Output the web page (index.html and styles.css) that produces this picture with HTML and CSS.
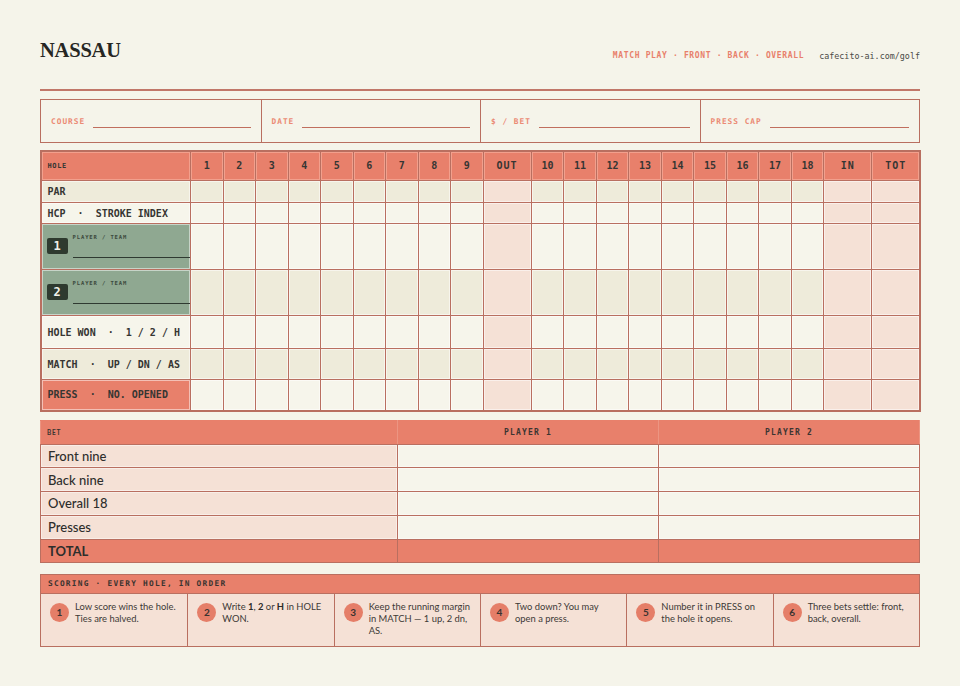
FILE: index.html
```html
<!DOCTYPE html>
<html lang="en">
<head>
<meta charset="utf-8">
<title>Nassau</title>
<link rel="stylesheet" href="styles.css">
</head>
<body>
<div class="page">
  <header class="top">
    <h1 class="title">NASSAU</h1>
    <div class="meta">
      <span class="modes">MATCH PLAY · FRONT · BACK · OVERALL</span>
      <span class="site">cafecito-ai.com/golf</span>
    </div>
  </header>
  <div class="rule"></div>

  <div class="fields">
    <div class="field"><span class="flabel">COURSE</span><span class="fline"></span></div>
    <div class="field"><span class="flabel">DATE</span><span class="fline"></span></div>
    <div class="field"><span class="flabel">$ / BET</span><span class="fline"></span></div>
    <div class="field"><span class="flabel">PRESS CAP</span><span class="fline"></span></div>
  </div>

  <table class="card">
    <colgroup>
      <col class="c-label">
      <col class="c-h"><col class="c-h"><col class="c-h"><col class="c-h"><col class="c-h"><col class="c-h"><col class="c-h"><col class="c-h"><col class="c-h">
      <col class="c-s">
      <col class="c-h"><col class="c-h"><col class="c-h"><col class="c-h"><col class="c-h"><col class="c-h"><col class="c-h"><col class="c-h"><col class="c-h">
      <col class="c-s"><col class="c-s">
    </colgroup>
    <tr class="r-head">
      <th class="lab small">HOLE</th>
      <th>1</th><th>2</th><th>3</th><th>4</th><th>5</th><th>6</th><th>7</th><th>8</th><th>9</th>
      <th class="sum">OUT</th>
      <th>10</th><th>11</th><th>12</th><th>13</th><th>14</th><th>15</th><th>16</th><th>17</th><th>18</th>
      <th class="sum">IN</th><th class="sum">TOT</th>
    </tr>
    <tr class="r-par">
      <td class="lab">PAR</td>
      <td></td><td></td><td></td><td></td><td></td><td></td><td></td><td></td><td></td><td class="s"></td>
      <td></td><td></td><td></td><td></td><td></td><td></td><td></td><td></td><td></td><td class="s"></td><td class="s"></td>
    </tr>
    <tr class="r-hcp">
      <td class="lab">HCP &nbsp;·&nbsp; STROKE INDEX</td>
      <td></td><td></td><td></td><td></td><td></td><td></td><td></td><td></td><td></td><td class="s"></td>
      <td></td><td></td><td></td><td></td><td></td><td></td><td></td><td></td><td></td><td class="s"></td><td class="s"></td>
    </tr>
    <tr class="r-p1">
      <td class="lab player">
        <div class="pwrap"><span class="badge">1</span><div class="pname"><span class="ptag">PLAYER / TEAM</span></div></div>
      </td>
      <td></td><td></td><td></td><td></td><td></td><td></td><td></td><td></td><td></td><td class="s"></td>
      <td></td><td></td><td></td><td></td><td></td><td></td><td></td><td></td><td></td><td class="s"></td><td class="s"></td>
    </tr>
    <tr class="r-p2">
      <td class="lab player">
        <div class="pwrap"><span class="badge">2</span><div class="pname"><span class="ptag">PLAYER / TEAM</span></div></div>
      </td>
      <td></td><td></td><td></td><td></td><td></td><td></td><td></td><td></td><td></td><td class="s"></td>
      <td></td><td></td><td></td><td></td><td></td><td></td><td></td><td></td><td></td><td class="s"></td><td class="s"></td>
    </tr>
    <tr class="r-won">
      <td class="lab">HOLE WON &nbsp;·&nbsp; 1 / 2 / H</td>
      <td></td><td></td><td></td><td></td><td></td><td></td><td></td><td></td><td></td><td class="s"></td>
      <td></td><td></td><td></td><td></td><td></td><td></td><td></td><td></td><td></td><td class="s"></td><td class="s"></td>
    </tr>
    <tr class="r-match">
      <td class="lab">MATCH &nbsp;·&nbsp; UP / DN / AS</td>
      <td></td><td></td><td></td><td></td><td></td><td></td><td></td><td></td><td></td><td class="s"></td>
      <td></td><td></td><td></td><td></td><td></td><td></td><td></td><td></td><td></td><td class="s"></td><td class="s"></td>
    </tr>
    <tr class="r-press">
      <td class="lab">PRESS &nbsp;·&nbsp; NO. OPENED</td>
      <td></td><td></td><td></td><td></td><td></td><td></td><td></td><td></td><td></td><td class="s"></td>
      <td></td><td></td><td></td><td></td><td></td><td></td><td></td><td></td><td></td><td class="s"></td><td class="s"></td>
    </tr>
  </table>

  <table class="bets">
    <colgroup><col class="b-label"><col class="b-p"><col class="b-p"></colgroup>
    <tr class="b-head"><th class="b-bet">BET</th><th>PLAYER 1</th><th>PLAYER 2</th></tr>
    <tr><td class="b-name">Front nine</td><td></td><td></td></tr>
    <tr><td class="b-name">Back nine</td><td></td><td></td></tr>
    <tr><td class="b-name">Overall 18</td><td></td><td></td></tr>
    <tr><td class="b-name">Presses</td><td></td><td></td></tr>
    <tr class="b-total"><td class="b-name">TOTAL</td><td></td><td></td></tr>
  </table>

  <section class="scoring">
    <div class="sc-head">SCORING · EVERY HOLE, IN ORDER</div>
    <div class="sc-grid">
      <div class="step"><span class="num">1</span><p>Low score wins the hole. Ties are halved.</p></div>
      <div class="step"><span class="num">2</span><p>Write <b>1</b>, <b>2</b> or <b>H</b> in HOLE WON.</p></div>
      <div class="step"><span class="num">3</span><p>Keep the running margin in MATCH — 1 up, 2 dn, AS.</p></div>
      <div class="step"><span class="num">4</span><p>Two down? You may open a press.</p></div>
      <div class="step"><span class="num">5</span><p>Number it in PRESS on the hole it opens.</p></div>
      <div class="step"><span class="num">6</span><p>Three bets settle: front, back, overall.</p></div>
    </div>
  </section>
</div>
</body>
</html>
```

FILE: styles.css
```css
:root {
  --bg: #f5f4ea;
  --coral: #e8806b;
  --line: #b96f60;
  --pink: #f5e1d6;
  --beige: #eeebda;
  --light: #f6f5eb;
  --sage: #8fa891;
  --dkgreen: #2e3a2f;
  --ink: #333331;
  --mono: "DejaVu Sans Mono", "Liberation Mono", monospace;
  --sans: Lato, "Noto Sans", sans-serif;
}

* { box-sizing: border-box; }

html, body {
  margin: 0;
  padding: 0;
  background: var(--bg);
}

.page {
  width: 960px;
  padding: 37px 40px 0 40px;
  color: var(--ink);
}

.top {
  display: flex;
  justify-content: space-between;
  align-items: flex-start;
}

.title {
  margin: 0;
  font-family: "Liberation Serif", "DejaVu Serif", serif;
  font-weight: 700;
  font-size: 20.5px;
  line-height: 26px;
  letter-spacing: -0.2px;
  color: #262623;
}

.meta {
  display: flex;
  gap: 15px;
  margin-top: 14px;
  font-family: var(--mono);
  font-size: 8px;
  line-height: 10px;
}

.modes {
  color: #e8806b;
  letter-spacing: 0.65px;
  font-weight: 700;
}

.site {
  color: #4a4a46;
  font-size: 8.4px;
  letter-spacing: 0;
}

.rule {
  margin-top: 26px;
  height: 2px;
  background: #c17769;
}

.fields {
  margin-top: 8px;
  height: 43.5px;
  display: grid;
  grid-template-columns: repeat(4, 1fr);
  border: 1.5px solid var(--line);
}

.field {
  display: flex;
  align-items: center;
  padding: 0 10px;
  gap: 8px;
  border-left: 1.5px solid var(--line);
}
.field:first-child { border-left: none; }

.flabel {
  font-family: var(--mono);
  font-size: 7.8px;
  font-weight: 700;
  letter-spacing: 1px;
  color: #eb8a74;
  white-space: nowrap;
  margin-top: 1px;
}

.fline {
  flex: 1;
  height: 1.5px;
  background: #c06e5e;
  margin-top: 13px;
}

/* scorecard */
.card {
  margin-top: 7px;
  width: 881px;
  margin-left: -0.5px;
  table-layout: fixed;
  border-collapse: collapse;
  border: 2px solid var(--line);
  font-family: var(--mono);
  color: #363633;
}

.c-label { width: 150px; }
.c-h { width: 32.5px; }
.c-s { width: 48.2px; }

.card th, .card td {
  border: 1px solid var(--line);
  box-shadow: inset 0 0 0 1px rgba(255, 255, 255, 0.5);
  padding: 0;
}

.card th {
  background: var(--coral);
  font-size: 10px;
  font-weight: 700;
  text-align: center;
  box-shadow: inset 0 0 0 1px rgba(255, 200, 185, 0.45);
}

.card th.sum { letter-spacing: 1px; }

.card .lab {
  text-align: left;
  padding-left: 6px;
  font-size: 10px;
  font-weight: 700;
  letter-spacing: 0;
  white-space: nowrap;
}

.card th.small {
  font-size: 7px;
  letter-spacing: 0.6px;
  padding-top: 1px;
}

.r-head { height: 30px; }
.r-par { height: 22px; }
.r-hcp { height: 21px; }
.r-p1, .r-p2 { height: 46px; }
.r-won { height: 33px; }
.r-match { height: 31px; }
.r-press { height: 31px; }

.r-par td, .r-p2 td, .r-match td { background: var(--beige); }
.r-hcp td, .r-p1 td, .r-won td, .r-press td { background: var(--light); }
.card td.s { background: var(--pink); }
.r-press td.lab { background: var(--coral); }

.card td.player {
  background: var(--sage);
  padding: 0 0 0 5px;
}

.pwrap {
  display: flex;
  align-items: center;
  gap: 5px;
}

.badge {
  width: 21px;
  height: 16px;
  border-radius: 2px;
  background: var(--dkgreen);
  color: #f1f1e8;
  font-family: var(--mono);
  font-size: 12px;
  font-weight: 700;
  line-height: 16px;
  text-align: center;
  margin-top: -2px;
}

.pname {
  flex: 1;
  height: 24px;
  border-bottom: 1.5px solid #2f3a31;
  margin-top: -1px;
}

.ptag {
  display: block;
  font-family: var(--mono);
  font-size: 5.5px;
  letter-spacing: 0.9px;
  color: #3c4a3d;
  font-weight: 700;
  line-height: 7px;
}

/* bets */
.bets {
  margin-top: 8px;
  width: 880px;
  table-layout: fixed;
  border-collapse: collapse;
  border: 1.5px solid var(--line);
}

.b-label { width: 357px; }
.b-p { width: 261px; }

.bets th, .bets td {
  border: 1px solid var(--line);
  box-shadow: inset 0 0 0 1px rgba(255, 255, 255, 0.45);
  padding: 0;
}

.bets tr { height: 23.8px; }
.bets tr.b-head { height: 24px; }
.bets th {
  background: var(--coral);
  font-family: var(--mono);
  font-size: 8px;
  font-weight: 700;
  letter-spacing: 1.2px;
  color: #3b3531;
  border-color: var(--coral);
  border-bottom-color: var(--line);
  border-left-color: #ec9582;
  border-right-color: #ec9582;
  box-shadow: none;
}

.bets th.b-bet {
  text-align: left;
  padding-left: 6px;
  font-family: var(--sans);
  font-size: 6.5px;
  letter-spacing: 0.8px;
}

.bets td { background: var(--light); }
.bets td.b-name {
  background: var(--pink);
  font-family: var(--sans);
  font-size: 13px;
  font-weight: 500;
  color: #2e2e2c;
  padding-left: 7px;
}

.b-total td, .b-total td.b-name {
  background: var(--coral);
  font-weight: 700;
  box-shadow: none;
}

/* scoring */
.scoring {
  margin-top: 11px;
  width: 880px;
  border: 1.5px solid var(--line);
}

.sc-head {
  height: 19px;
  background: var(--coral);
  border-bottom: 1.5px solid var(--line);
  font-family: var(--mono);
  font-size: 7.8px;
  font-weight: 700;
  letter-spacing: 1.25px;
  color: #3a3430;
  line-height: 18px;
  padding-left: 7px;
}

.sc-grid {
  display: grid;
  grid-template-columns: repeat(6, 1fr);
  background: var(--pink);
}

.step {
  display: flex;
  align-items: flex-start;
  gap: 6px;
  height: 52px;
  padding: 7px 8px 0 9px;
  border-left: 1.5px solid var(--line);
}
.step:first-child { border-left: none; }

.num {
  flex: none;
  width: 19px;
  height: 19px;
  border-radius: 50%;
  background: #e57e68;
  color: #3a3330;
  font-family: var(--sans);
  font-weight: 700;
  font-size: 10px;
  line-height: 19px;
  text-align: center;
  margin-top: 2px;
}

.step p {
  margin: 0;
  font-family: var(--sans);
  font-size: 9.4px;
  line-height: 12px;
  color: #3d3a36;
}

.step b { font-weight: 700; color: #2c2a28; }
```
